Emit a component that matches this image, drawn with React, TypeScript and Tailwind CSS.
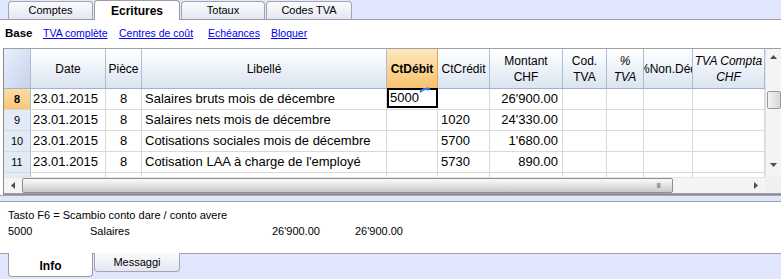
import React from "react";

const cols = [27, 75, 36, 245, 51, 52, 73, 44, 37, 49, 72];

type Row = { n: string; date: string; p: string; lib: string; deb: string; cred: string; mont: string };
const rows: Row[] = [
  { n: "8", date: "23.01.2015", p: "8", lib: "Salaires bruts mois de décembre", deb: "5000", cred: "", mont: "26'900.00" },
  { n: "9", date: "23.01.2015", p: "8", lib: "Salaires nets mois de décembre", deb: "", cred: "1020", mont: "24'330.00" },
  { n: "10", date: "23.01.2015", p: "8", lib: "Cotisations sociales mois de décembre", deb: "", cred: "5700", mont: "1'680.00" },
  { n: "11", date: "23.01.2015", p: "8", lib: "Cotisation LAA à charge de l'employé", deb: "", cred: "5730", mont: "890.00" },
];

function TopTab({ label, active, w }: { label: string; active?: boolean; w: string }) {
  if (active) {
    return (
      <div className={`${w} h-[20px] -mb-px bg-white border border-b-0 border-[#9c9ca8] rounded-t-[4px] flex items-center justify-center font-bold text-[12px] text-black z-10`}>
        {label}
      </div>
    );
  }
  return (
    <div className={`${w} h-[18px] bg-gradient-to-b from-[#fbfbfd] to-[#e4e7f2] border border-b-0 border-[#a4a4b0] rounded-t-[4px] flex items-center justify-center text-[11px] text-black`}>
      {label}
    </div>
  );
}

function HeaderCell({ w, children, active, className = "" }: { w: number; children?: React.ReactNode; active?: boolean; className?: string }) {
  return (
    <div
      style={{ width: w }}
      className={`shrink-0 h-full border-r overflow-hidden whitespace-nowrap flex flex-col items-center justify-center text-center leading-[16px] text-[12px] ${
        active
          ? "bg-gradient-to-b from-[#fde7bd] to-[#f7c26c] border-[#f0a33c] font-bold"
          : "bg-gradient-to-b from-[#ffffff] to-[#dbe4f2] border-[#a9bdd6]"
      } ${className}`}
    >
      {children}
    </div>
  );
}

function Cell({ w, children, className = "" }: { w: number; children?: React.ReactNode; className?: string }) {
  return (
    <div style={{ width: w }} className={`shrink-0 h-full border-r border-[#d9d9d9] flex items-center overflow-hidden whitespace-nowrap ${className}`}>
      {children}
    </div>
  );
}

export default function App() {
  return (
    <div className="w-[781px] h-[279px] bg-[#dfe6fd] flex flex-col overflow-hidden text-black" style={{ fontFamily: '"Liberation Sans", Arial, sans-serif' }}>
      {/* top tabs */}
      <div className="h-[20px] flex items-end gap-[1px] pl-[8px] border-b border-[#9c9ca8] shrink-0">
        <TopTab label="Comptes" w="w-[85px]" />
        <TopTab label="Ecritures" active w="w-[86px]" />
        <TopTab label="Totaux" w="w-[84px]" />
        <TopTab label="Codes TVA" w="w-[86px]" />
      </div>

      {/* content */}
      <div className="bg-white h-[175px] flex flex-col shrink-0">
        <div className="h-[28px] flex items-center pl-[5px] text-[10.5px] shrink-0">
          <span className="font-bold text-[11.5px] w-[38px]">Base</span>
          <span className="text-[#0000ee] underline w-[76px]">TVA complète</span>
          <span className="text-[#0000ee] underline w-[89px]">Centres de coût</span>
          <span className="text-[#0000ee] underline w-[63px]">Echéances</span>
          <span className="text-[#0000ee] underline">Bloquer</span>
        </div>

        <div className="ml-[3px] border-l border-[#8c8c8c] flex flex-col h-[147px]">
          <div className="flex h-[129px] border-t border-[#a0a0a0]">
            {/* table */}
            <div className="w-[761px] flex flex-col overflow-hidden">
              <div className="h-[40px] flex border-b border-[#9fb3cc] shrink-0">
                <HeaderCell w={cols[0]} className="!bg-gradient-to-br !from-[#e9effc] !to-[#c5d3ea]" />
                <HeaderCell w={cols[1]}>Date</HeaderCell>
                <HeaderCell w={cols[2]}>Pièce</HeaderCell>
                <HeaderCell w={cols[3]}>Libellé</HeaderCell>
                <HeaderCell w={cols[4]} active>CtDébit</HeaderCell>
                <HeaderCell w={cols[5]}>CtCrédit</HeaderCell>
                <HeaderCell w={cols[6]}>
                  <span>Montant</span>
                  <span>CHF</span>
                </HeaderCell>
                <HeaderCell w={cols[7]}>
                  <span>Cod.</span>
                  <span>TVA</span>
                </HeaderCell>
                <HeaderCell w={cols[8]} className="italic">
                  <span>%</span>
                  <span>TVA</span>
                </HeaderCell>
                <HeaderCell w={cols[9]}>
                  <span>%Non.Déd</span>
                </HeaderCell>
                <HeaderCell w={cols[10]} className="italic">
                  <span>TVA Compta</span>
                  <span>CHF</span>
                </HeaderCell>
              </div>

              {rows.map((r, i) => (
                <div key={r.n} className="h-[21px] flex border-b border-[#d9d9d9] shrink-0 text-[13px]">
                  <div
                    style={{ width: cols[0] }}
                    className={`shrink-0 h-full border-r border-[#a9bdd6] flex items-center justify-center text-[11px] ${
                      i === 0 ? "bg-gradient-to-b from-[#fddca4] to-[#f8c778] font-bold" : "bg-[#e3ebf7]"
                    }`}
                  >
                    {r.n}
                  </div>
                  <Cell w={cols[1]} className="pl-[2px]">{r.date}</Cell>
                  <Cell w={cols[2]} className="justify-center">{r.p}</Cell>
                  <Cell w={cols[3]} className="pl-[3px]">{r.lib}</Cell>
                  {i === 0 ? (
                    <div style={{ width: cols[4] }} className="shrink-0 h-full relative border-2 border-black -my-px flex items-center pl-px bg-white">
                      {r.deb}
                      <svg className="absolute -top-[3px] right-[5px]" width="12" height="6" viewBox="0 0 12 6">
                        <path d="M1 5 Q5 1 10 2" stroke="#2f7de0" strokeWidth="2" fill="none" />
                        <path d="M8 0 L12 2 L8 4 Z" fill="#2f7de0" />
                      </svg>
                    </div>
                  ) : (
                    <Cell w={cols[4]} className="pl-[2px]">{r.deb}</Cell>
                  )}
                  <Cell w={cols[5]} className="pl-[3px]">{r.cred}</Cell>
                  <Cell w={cols[6]} className="justify-end pr-[4px]">{r.mont}</Cell>
                  <Cell w={cols[7]} />
                  <Cell w={cols[8]} />
                  <Cell w={cols[9]} />
                  <Cell w={cols[10]} />
                </div>
              ))}
              <div className="h-[4px] flex shrink-0">
                <div style={{ width: cols[0] }} className="shrink-0 h-full bg-[#e3ebf7] border-r border-[#a9bdd6]" />
                {cols.slice(1).map((w, k) => (
                  <div key={k} style={{ width: w }} className="shrink-0 h-full border-r border-[#d9d9d9]" />
                ))}
              </div>
            </div>

            {/* vertical scrollbar */}
            <div className="w-[16px] bg-[#f4f4f4] border-l border-[#e2e2e2] flex flex-col items-center">
              <div className="h-[16px] w-full flex items-center justify-center">
                <svg width="7" height="4" viewBox="0 0 7 4"><path d="M0 4 L3.5 0 L7 4 Z" fill="#4d4d4d" /></svg>
              </div>
              <div className="mt-[26px] w-[14px] h-[18px] rounded-[2px] border border-[#9a9a9a] bg-gradient-to-r from-[#f2f2f2] to-[#d8d8d8]" />
              <div className="flex-1" />
              <div className="h-[16px] w-full flex items-center justify-center mb-[4px]">
                <svg width="7" height="4" viewBox="0 0 7 4"><path d="M0 0 L7 0 L3.5 4 Z" fill="#4d4d4d" /></svg>
              </div>
            </div>
          </div>

          {/* horizontal scrollbar */}
          <div className="flex h-[16px] shrink-0">
            <div className="w-[761px] bg-[#f4f4f4] flex items-center border-t border-[#e6e6e6]">
              <div className="w-[18px] flex items-center justify-center">
                <svg width="4" height="7" viewBox="0 0 4 7"><path d="M4 0 L0 3.5 L4 7 Z" fill="#4d4d4d" /></svg>
              </div>
              <div className="w-[651px] h-[15px] rounded-[2px] border border-[#8e8e8e] bg-gradient-to-b from-[#fafafa] via-[#e3e3e3] to-[#c9c9c9] relative flex items-center justify-center">
                <span className="absolute right-[12px] text-[8px] tracking-[-1px] text-[#777]">III</span>
              </div>
              <div className="flex-1" />
              <div className="w-[18px] flex items-center justify-center">
                <svg width="4" height="7" viewBox="0 0 4 7"><path d="M0 0 L4 3.5 L0 7 Z" fill="#4d4d4d" /></svg>
              </div>
            </div>
            <div className="w-[16px] bg-[#f0f0f0]" />
          </div>
          <div className="flex-1 border-t border-[#a0a0a0] border-b border-b-[#8c8c8c]" />
        </div>
      </div>

      {/* blue strip */}
      <div className="h-[6px] shrink-0 border-t border-[#a6a6b2]" />

      {/* info panel */}
      <div className="h-[53px] bg-white border-t border-b border-[#a0a0a0] shrink-0 pl-[8px] pt-[5px] text-[11px] leading-[16px]">
        <div>Tasto F6 = Scambio conto dare / conto avere</div>
        <div className="flex">
          <span className="w-[82px]">5000</span>
          <span className="w-[182px]">Salaires</span>
          <span className="w-[83px]">26'900.00</span>
          <span>26'900.00</span>
        </div>
      </div>

      {/* bottom tabs */}
      <div className="flex items-start gap-[1px] pl-[8px] shrink-0">
        <div className="w-[85px] h-[24px] -mt-px bg-white border border-t-0 border-[#9c9ca8] rounded-b-[4px] flex items-center justify-center font-bold text-[12px] pt-[2px]">
          Info
        </div>
        <div className="w-[86px] h-[19px] -mt-px bg-gradient-to-b from-[#fbfbfd] to-[#e4e7f2] border border-t-0 border-[#a4a4b0] rounded-b-[4px] flex items-center justify-center text-[11px]">
          Messaggi
        </div>
      </div>
    </div>
  );
}
